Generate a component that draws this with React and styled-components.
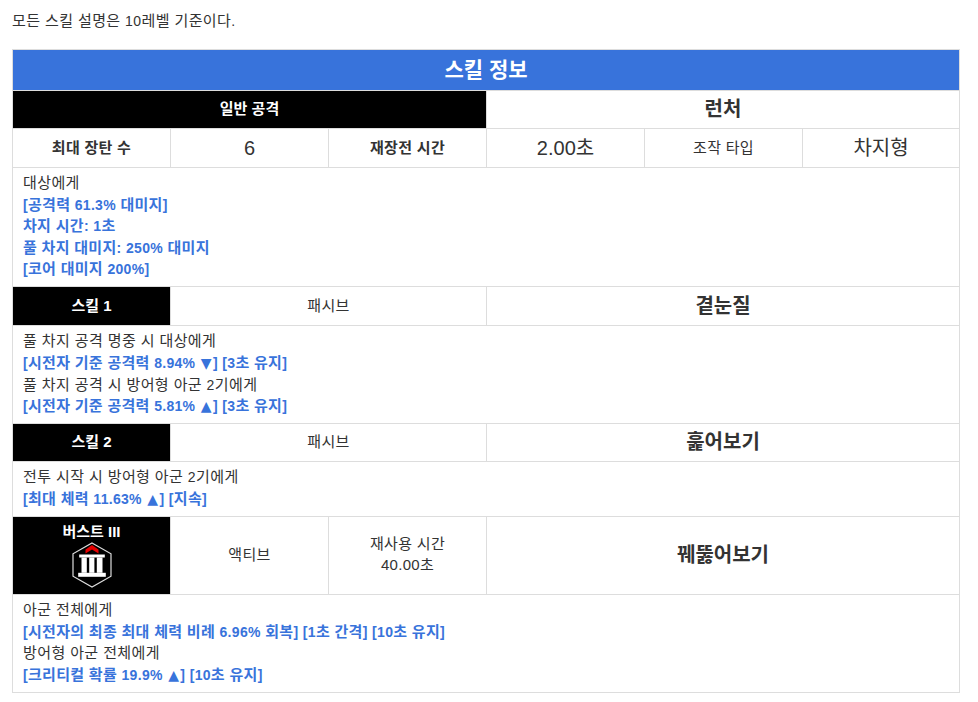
import React from 'react';
import styled, { createGlobalStyle } from 'styled-components';

const GlobalStyle = createGlobalStyle`
  html, body {
    margin: 0;
    padding: 0;
    background: #fff;
  }
  body {
    font-family: "Liberation Sans", "Noto Sans CJK KR", sans-serif;
    font-size: 15px;
    line-height: 1.42857;
    color: #333;
  }
`;

const Page = styled.div`
  padding: 10px 18px 10px 12px;
`;

const Intro = styled.p`
  margin: 0 0 17.5px;
  letter-spacing: 0.4px;
`;

const Table = styled.table`
  width: 947px;
  table-layout: fixed;
  border-collapse: collapse;
  background: #fff;
`;

const Col = styled.col`
  width: ${(p) => p.$w || 158}px;
`;

// $lift nudges the text up without changing the row height
const Cell = styled.td`
  border: 1px solid #ddd;
  padding: 0 8px ${(p) => (p.$lift ? 2 : 0)}px;
  text-align: center;
  height: ${(p) => (p.$h || 37) - (p.$lift ? 2 : 0)}px;
`;

const Header = styled(Cell).attrs({ as: 'th' })`
  background: #3873db;
  color: #fff;
  font-size: 21px;
  font-weight: 700;
`;

const DarkCell = styled(Cell)`
  background: #000;
  color: #fff;
  font-weight: 700;
`;

const Label = styled(Cell)`
  font-weight: ${(p) => (p.$thin ? 400 : 700)};
  letter-spacing: 0.3px;
`;

const Value = styled(Cell)`
  font-size: 20px;
`;

const Name = styled(Cell)`
  font-size: 20px;
  font-weight: 700;
`;

const Desc = styled(Cell)`
  text-align: left;
  padding: 4px 10px 6.5px;
`;

const Line = styled.div`
  line-height: 21.6px;
  color: ${(p) => (p.$hi ? '#3873db' : '#333')};
  font-weight: ${(p) => (p.$hi ? 700 : 400)};
  letter-spacing: ${(p) => (p.$hi ? '0.3px' : '0.4px')};
`;

const Latin = styled.span`
  font-size: 14px;
  line-height: 1;
`;

const Tri = styled.span`
  font-family: "DejaVu Sans", sans-serif;
  font-size: 14px;
  line-height: 1;
  margin: 0 1px;
`;

const BurstTitle = styled.div`
  line-height: 20px;
`;

const BurstIcon = styled.svg`
  display: block;
  margin: 0 auto;
`;

const BurstBadge = () => (
  <BurstIcon width="40" height="46" viewBox="0 0 40 46">
    <path d="M20 1 L39 11.8 V34.2 L20 45 L1 34.2 V11.8 Z" fill="#000" stroke="#ddd" strokeWidth="1.2" />
    <path d="M20 3 L26.5 7.5 V11.5 L20 7.5 L13.5 11.5 V7.5 Z" fill="#e60000" />
    <rect x="7.2" y="12.5" width="25.6" height="3" fill="#fff" />
    <rect x="9.5" y="15.5" width="5.3" height="15.3" fill="#fff" />
    <rect x="17.2" y="15.5" width="5.2" height="15.3" fill="#fff" />
    <rect x="24.8" y="15.5" width="5.7" height="15.3" fill="#fff" />
    <rect x="6.2" y="30.8" width="27.6" height="4" fill="#fff" />
  </BurstIcon>
);

// latin runs and triangles sit a size below the hangul, as in the source page
const Mixed = ({ text }) =>
  text.split(/([▲▼]|[\x21-\x7e]+)/).map((part, i) => {
    if (/^[▲▼]$/.test(part)) return <Tri key={i}>{part}</Tri>;
    if (/^[\x21-\x7e]+$/.test(part)) return <Latin key={i}>{part}</Latin>;
    return part;
  });

const Description = ({ lines, colSpan = 6 }) => (
  <Desc colSpan={colSpan}>
    {lines.map(([text, hi]) => (
      <Line key={text} $hi={hi}><Mixed text={text} /></Line>
    ))}
  </Desc>
);

export default function App() {
  return (
    <Page>
      <GlobalStyle />
      <Intro><Mixed text="모든 스킬 설명은 10레벨 기준이다." /></Intro>
      <Table>
        <colgroup>
          <Col /><Col /><Col /><Col /><Col /><Col $w={157} />
        </colgroup>
        <tbody>
          <tr><Header colSpan={6} $h={40}>스킬 정보</Header></tr>
          <tr>
            <DarkCell colSpan={3} $lift>일반 공격</DarkCell>
            <Name colSpan={3}>런처</Name>
          </tr>
          <tr>
            <Label $h={38}>최대 장탄 수</Label>
            <Value>6</Value>
            <Label>재장전 시간</Label>
            <Value>2.00초</Value>
            <Label $thin>조작 타입</Label>
            <Value>차지형</Value>
          </tr>
          <tr>
            <Description lines={[
              ['대상에게'],
              ['[공격력 61.3% 대미지]', true],
              ['차지 시간: 1초', true],
              ['풀 차지 대미지: 250% 대미지', true],
              ['[코어 대미지 200%]', true],
            ]} />
          </tr>
          <tr>
            <DarkCell $h={38} $lift>스킬 1</DarkCell>
            <Label colSpan={2} $thin $lift $h={38}>패시브</Label>
            <Name colSpan={3}>곁눈질</Name>
          </tr>
          <tr>
            <Description lines={[
              ['풀 차지 공격 명중 시 대상에게'],
              ['[시전자 기준 공격력 8.94% ▼] [3초 유지]', true],
              ['풀 차지 공격 시 방어형 아군 2기에게'],
              ['[시전자 기준 공격력 5.81% ▲] [3초 유지]', true],
            ]} />
          </tr>
          <tr>
            <DarkCell $lift>스킬 2</DarkCell>
            <Label colSpan={2} $thin $lift>패시브</Label>
            <Name colSpan={3}>훑어보기</Name>
          </tr>
          <tr>
            <Description lines={[
              ['전투 시작 시 방어형 아군 2기에게'],
              ['[최대 체력 11.63% ▲] [지속]', true],
            ]} />
          </tr>
          <tr>
            <DarkCell $h={77}>
              <BurstTitle>버스트 III</BurstTitle>
              <BurstBadge />
            </DarkCell>
            <Label $thin $lift $h={77}>액티브</Label>
            <Label $thin $lift $h={77}>재사용 시간<br />40.00초</Label>
            <Name colSpan={3}>꿰뚫어보기</Name>
          </tr>
          <tr>
            <Description lines={[
              ['아군 전체에게'],
              ['[시전자의 최종 최대 체력 비례 6.96% 회복] [1초 간격] [10초 유지]', true],
              ['방어형 아군 전체에게'],
              ['[크리티컬 확률 19.9% ▲] [10초 유지]', true],
            ]} />
          </tr>
        </tbody>
      </Table>
    </Page>
  );
}
